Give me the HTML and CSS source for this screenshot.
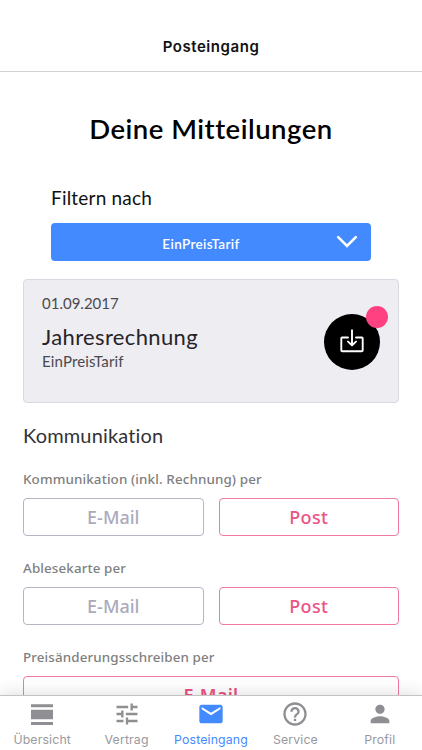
FILE: index.html
```html
<!DOCTYPE html>
<html lang="de">
<head>
<meta charset="utf-8">
<title>Posteingang</title>
<link rel="stylesheet" href="styles.css">
</head>
<body>
<div class="app">
  <header class="navbar"><span class="navbar-title">Posteingang</span></header>
  <main class="content">
    <h1 class="title">Deine Mitteilungen</h1>
    <section class="filter">
      <div class="filter-label"><span>Filtern nach</span></div>
      <button class="select"><span class="select-value">EinPreisTarif</span>
        <svg class="chevron" width="22" height="14" viewBox="0 0 22 14"><path d="M2.2 2.2 11 11 19.8 2.2" fill="none" stroke="#fff" stroke-width="2.6" stroke-linecap="round"/></svg>
      </button>
    </section>
    <article class="card">
      <div class="card-text">
        <div class="card-date"><span>01.09.2017</span></div>
        <div class="card-title"><span>Jahresrechnung</span></div>
        <div class="card-sub"><span>EinPreisTarif</span></div>
      </div>
      <button class="download" aria-label="Herunterladen">
        <svg width="24" height="24" viewBox="0 0 24 24" fill="none" stroke="#fff" stroke-width="1.9" stroke-linejoin="round" stroke-linecap="round"><path d="M8 8.5H2.2a.9.9 0 0 0-.9.9v11.9a.9.9 0 0 0 .9.9h19.6a.9.9 0 0 0 .9-.9V9.400a.9.9 0 0 0-.9-.9H16M12 1.200v14.600M8 12.600l4 3.600 4-3.600"/></svg>
        <span class="badge"></span>
      </button>
    </article>
    <h2 class="section-title"><span>Kommunikation</span></h2>
    <section class="option">
      <div class="option-label"><span>Kommunikation (inkl. Rechnung) per</span></div>
      <div class="choices"><button class="choice">E-Mail</button><button class="choice choice-on">Post</button></div>
    </section>
    <section class="option">
      <div class="option-label"><span>Ablesekarte per</span></div>
      <div class="choices"><button class="choice">E-Mail</button><button class="choice choice-on">Post</button></div>
    </section>
    <section class="option">
      <div class="option-label"><span>Preisänderungsschreiben per</span></div>
      <div class="choices"><button class="choice choice-on choice-wide">E-Mail</button></div>
    </section>
  </main>
  <nav class="tabs">
    <a class="tab"><svg width="28" height="28" viewBox="0 0 28 28" fill="currentColor"><path d="M3 4.200h22v3.100H3zM3 9.700h22v9.600H3zM3 22h22v3.100H3z"/></svg><span>Übersicht</span></a>
    <a class="tab"><svg width="28" height="28" viewBox="0 0 24 24" fill="currentColor"><path d="M3 17v2h6v-2H3zM3 5v2h10V5H3zm10 16v-2h8v-2h-8v-2h-2v6h2zM7 9v2H3v2h4v2h2V9H7zm14 4v-2H11v2h10zm-6-4h2V7h4V5h-4V3h-2v6z"/></svg><span>Vertrag</span></a>
    <a class="tab tab-on"><svg width="28" height="28" viewBox="0 0 24 24" fill="currentColor"><path d="M20 4H4c-1.100 0-2 .9-2 2v12c0 1.100.9 2 2 2h16c1.100 0 2-.9 2-2V6c0-1.100-.9-2-2-2zm0 4-8 5-8-5V6l8 5 8-5v2z"/></svg><span>Posteingang</span></a>
    <a class="tab"><svg width="28" height="28" viewBox="0 0 24 24" fill="currentColor"><path d="M11 18h2v-2h-2v2zm1-16C6.480 2 2 6.480 2 12s4.480 10 10 10 10-4.480 10-10S17.520 2 12 2zm0 18c-4.410 0-8-3.590-8-8s3.590-8 8-8 8 3.590 8 8-3.590 8-8 8zm0-14c-2.210 0-4 1.790-4 4h2c0-1.100.9-2 2-2s2 .9 2 2c0 2-3 1.750-3 5h2c0-2.250 3-2.500 3-5 0-2.210-1.790-4-4-4z"/></svg><span>Service</span></a>
    <a class="tab"><svg width="28" height="28" viewBox="0 0 24 24" fill="currentColor"><path d="M12 12c2.210 0 4-1.790 4-4s-1.790-4-4-4-4 1.790-4 4 1.790 4 4 4zm0 2c-2.670 0-8 1.340-8 4v2h16v-2c0-2.660-5.330-4-8-4z"/></svg><span>Profil</span></a>
  </nav>
</div>
</body>
</html>
```

FILE: styles.css
```css
* { box-sizing: border-box; }
body { margin: 0; background: #fff; }
button { font: inherit; margin: 0; padding: 0; border: 0; }
.app { width: 422px; height: 750px; display: flex; flex-direction: column; overflow: hidden; font-family: Lato, "Open Sans", sans-serif; color: #111; }
.navbar { height: 72px; flex: none; padding-top: 23px; border-bottom: 1px solid #d2d2d4; display: flex; align-items: center; justify-content: center; }
.navbar-title { font: 600 15px/20px Inter, sans-serif; letter-spacing: .55px; }
.content { flex: 1; min-height: 0; overflow: hidden; padding: 0 23px; }
.title { margin: 38px 0 0; font-size: 27.5px; line-height: 38px; font-weight: 600; text-align: center; color: #000; letter-spacing: .5px; }
.filter { padding: 0 28px; margin-top: 38px; }
.filter-label { height: 24px; font-size: 19px; line-height: 24px; letter-spacing: .2px; }
.select { width: 100%; height: 38px; margin-top: 13px; padding-right: 13px; border-radius: 4px; background: #448aff; color: #fff; display: flex; align-items: center; }
.select-value { flex: 1; padding: 4px 0 0 15px; font-size: 13.5px; font-weight: 600; line-height: 18px; text-align: center; letter-spacing: .35px; }
.chevron { flex: none; }
.card { height: 124px; margin-top: 18px; padding: 13px 18px; background: #eeedf2; border: 1px solid #dad9e2; border-radius: 4px; display: flex; justify-content: space-between; }
.card-text { color: #4a494e; }
.card-date { font-size: 15px; line-height: 20px; }
.card-title { margin-top: 10px; font-size: 22px; line-height: 28px; color: #252428; letter-spacing: .36px; }
.card-sub { font-size: 15px; line-height: 20px; letter-spacing: .15px; }
.download { position: relative; width: 56px; height: 56px; margin-top: 21px; border-radius: 50%; background: #000; display: grid; place-items: center; }
.download svg { margin-top: -3px; }
.badge { position: absolute; right: -8px; top: -8px; width: 22px; height: 22px; border-radius: 50%; background: #ff4081; }
.section-title { margin: 18px 0 0; font-size: 20px; line-height: 28px; font-weight: 400; color: #333235; letter-spacing: .15px; }
.option { margin-top: 20px; height: 69px; }
.section-title + .option { margin-top: 20px; }
.option-label { height: 20px; font: 500 13.4px/20px "Noto Sans", sans-serif; color: #808080; letter-spacing: .12px; }
.choices { display: flex; gap: 15px; margin-top: 9px; }
.choice { flex: 1; height: 38px; border: 1px solid #b6b5c4; border-radius: 4px; background: #fff; color: #abaabb; font: 500 18px/24px "Noto Sans", sans-serif; }
.choice-on { border-color: #f17ba0; color: #ec5385; letter-spacing: .3px; }
.choice-wide { font-weight: 600; }
.tabs { position: relative; flex: none; height: 55px; border-top: 1px solid #c4c4c6; background: #fff; display: grid; grid-template-columns: repeat(5, 1fr); box-shadow: 0 -2px 16px rgba(0,0,0,.12); }
.tab { display: flex; flex-direction: column; align-items: center; padding-top: 4px; color: #8e8e93; font: 400 12.3px/18px Inter, sans-serif; letter-spacing: .15px; }
.tab span { margin-top: 3px; color: #99999d; }
.tab-on, .tab-on span { color: #448aff; }
```
